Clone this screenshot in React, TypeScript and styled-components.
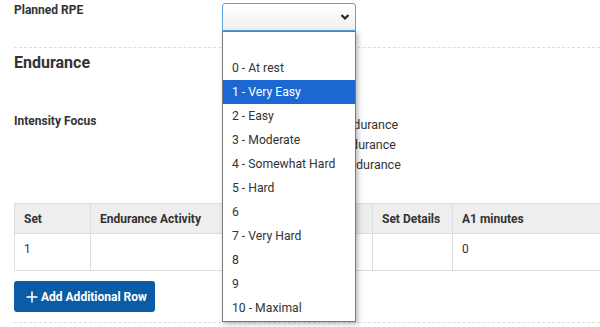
import React from "react";
import styled, { createGlobalStyle } from "styled-components";

const GlobalStyle = createGlobalStyle`
  html, body {
    margin: 0;
    padding: 0;
    background: #ffffff;
  }
  body {
    font-family: Roboto, "Liberation Sans", Arial, sans-serif;
    color: #333333;
  }
`;

const rpeOptions = [
  "",
  "0 - At rest",
  "1 - Very Easy",
  "2 - Easy",
  "3 - Moderate",
  "4 - Somewhat Hard",
  "5 - Hard",
  "6",
  "7 - Very Hard",
  "8",
  "9",
  "10 - Maximal",
];

const focusOptions = ["Low Endurance", "Mid Endurance", "High Endurance"];

const columns = [
  { title: "Set", width: 76 },
  { title: "Endurance Activity", width: 160 },
  { title: "Planned Duration", width: 122 },
  { title: "Set Details", width: 80 },
  { title: "A1 minutes", width: 220 },
];

const rowValues = ["1", "", "", "", "0"];

const App = () => {
  return (
    <Page>
      <GlobalStyle />
      <FormRow $top={2}>
        <Label>Planned RPE</Label>
        <SelectWrap>
          <SelectBox>
            <Chevron width="10" height="8" viewBox="0 0 10 8">
              <polyline points="1.5,2 5,5.5 8.5,2" />
            </Chevron>
          </SelectBox>
          <Dropdown>
            {rpeOptions.map((o, i) => (
              <Option key={i} $active={i === 2}>
                {o}
              </Option>
            ))}
          </Dropdown>
        </SelectWrap>
      </FormRow>

      <Divider />

      <Heading>Endurance</Heading>

      <FormRow $top={40}>
        <Label>Intensity Focus</Label>
        <RadioGroup>
          {focusOptions.map((f) => (
            <RadioItem key={f}>
              <Radio />
              {f}
            </RadioItem>
          ))}
        </RadioGroup>
      </FormRow>

      <Table>
        <colgroup>
          {columns.map((c) => (
            <col key={c.title} style={{ width: c.width }} />
          ))}
        </colgroup>
        <thead>
          <tr>
            {columns.map((c) => (
              <Th key={c.title}>{c.title}</Th>
            ))}
          </tr>
        </thead>
        <tbody>
          <tr>
            {rowValues.map((v, i) => (
              <Td key={i}>{v}</Td>
            ))}
          </tr>
        </tbody>
      </Table>

      <AddButton>
        <PlusIcon width="12" height="12" viewBox="0 0 12 12">
          <line x1="6" y1="0.5" x2="6" y2="11.5" />
          <line x1="0.5" y1="6" x2="11.5" y2="6" />
        </PlusIcon>
        Add Additional Row
      </AddButton>

      <Divider $top={10} />
    </Page>
  );
};

export default App;

const Page = styled.div`
  width: 600px;
  height: 327px;
  overflow: hidden;
  padding: 0 0 0 14px;
  box-sizing: border-box;
`;

const FormRow = styled.div<{ $top: number }>`
  display: flex;
  align-items: flex-start;
  padding-top: ${(p) => p.$top}px;
`;

const Label = styled.div`
  width: 208px;
  flex-shrink: 0;
  font-size: 12px;
  line-height: 16px;
  font-weight: 700;
  color: #333333;
`;

const SelectWrap = styled.div`
  position: relative;
  margin-top: 1px;
  width: 134px;
  z-index: 2;
`;

const SelectBox = styled.div`
  height: 28px;
  box-sizing: border-box;
  border: 1px solid #58a2e3;
  border-radius: 3px 3px 0 0;
  background: linear-gradient(#ffffff, #f0f0f0);
  display: flex;
  align-items: center;
  justify-content: flex-end;
  padding-right: 5px;
`;

const Chevron = styled.svg`
  fill: none;
  stroke: #222222;
  stroke-width: 2.2;
`;

const Dropdown = styled.div`
  position: absolute;
  top: 28px;
  left: 0;
  width: 134px;
  box-sizing: border-box;
  border: 1px solid #7a7a7a;
  background: #ffffff;
  box-shadow: 2px 2px 5px rgba(0, 0, 0, 0.28);
  padding-bottom: 1px;
`;

const Option = styled.div<{ $active: boolean }>`
  height: 24px;
  line-height: 24px;
  padding-left: 9px;
  font-size: 12.2px;
  white-space: nowrap;
  color: ${(p) => (p.$active ? "#ffffff" : "#333333")};
  background: ${(p) => (p.$active ? "#1b68d3" : "transparent")};
`;

const Divider = styled.div<{ $top?: number }>`
  margin-top: ${(p) => p.$top ?? 16}px;
  border-top: 1px dashed #dddddd;
`;

const Heading = styled.h2`
  margin: 5px 0 0;
  font-size: 16px;
  line-height: 20px;
  font-weight: 700;
  color: #333333;
`;

const RadioGroup = styled.div`
  display: flex;
  flex-direction: column;
  margin-top: 2px;
  padding-left: 73px;
`;

const RadioItem = styled.label`
  display: flex;
  align-items: center;
  gap: 6px;
  font-size: 12.5px;
  line-height: 20px;
  color: #333333;
`;

const Radio = styled.span`
  width: 12px;
  height: 12px;
  border-radius: 50%;
  border: 1px solid #888888;
  box-sizing: border-box;
`;

const Table = styled.table`
  margin-top: 28px;
  border-collapse: collapse;
  table-layout: fixed;
  width: 658px;
  font-size: 12px;
`;

const Th = styled.th`
  height: 30px;
  padding: 0 9px;
  box-sizing: border-box;
  text-align: left;
  font-weight: 700;
  background: #eeeeee;
  border: 1px solid #dddddd;
  color: #333333;
  white-space: nowrap;
`;

const Td = styled.td`
  height: 37px;
  padding: 8px 9px 0;
  box-sizing: border-box;
  vertical-align: top;
  border: 1px solid #dddddd;
  color: #333333;
`;

const AddButton = styled.button`
  margin-top: 10px;
  display: flex;
  align-items: center;
  gap: 3px;
  height: 31px;
  width: 141px;
  padding: 0 0 0 12px;
  border: none;
  border-radius: 3px;
  background: #0b5ca7;
  color: #ffffff;
  font-family: Roboto, "Liberation Sans", Arial, sans-serif;
  font-size: 12px;
  font-weight: 700;
  cursor: pointer;
`;

const PlusIcon = styled.svg`
  stroke: #ffffff;
  stroke-width: 1.6;
`;
